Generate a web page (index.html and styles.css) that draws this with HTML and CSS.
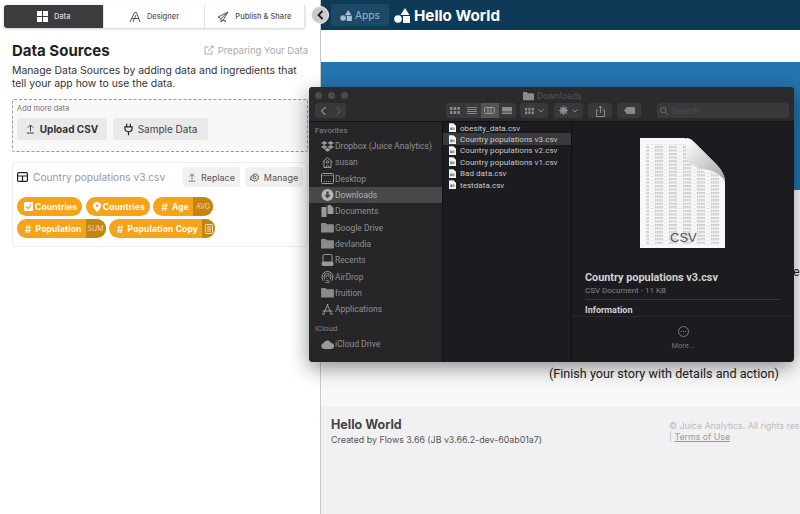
FILE: index.html
```html
<!DOCTYPE html>
<html lang="en">
<head>
    <meta charset="UTF-8">
    <title>Data Sources</title>
    <link rel="stylesheet" href="styles.css">
</head>
<body>
    <svg class="defs" width="0" height="0">
        <symbol id="folder" viewBox="0 0 14 12"><path d="M0 2q0-1 1-1h4l1 1.500h7q1 0 1 1v7q0 1-1 1H1q-1 0-1-1z" fill="#8b8b8d"/></symbol>
        <symbol id="csvfile" viewBox="0 0 8 10"><path d="M0 0h5l3 3v7H0z" fill="#f2f2f2"/><rect x="1.500" y="5" width="2.500" height="3" fill="#3f7fc0"/><rect x="4" y="5" width="2.500" height="3" fill="#c9a23a"/></symbol>
    </svg>

    <aside class="sidebar">
        <nav class="tabs">
            <a class="tab tab-active">
                <svg width="11" height="11" viewBox="0 0 11 11" fill="#fff"><rect width="5" height="5"/><rect x="6" width="5" height="5"/><rect y="6" width="5" height="5"/><rect x="6" y="6" width="5" height="5"/></svg>
                Data
            </a>
            <a class="tab">
                <svg width="12" height="12" viewBox="0 0 12 12" fill="none" stroke="#555"><path d="M1 11 5.500 1.500 7.500 1.500 11 11M3 7.500h7M4 11l3-7"/></svg>
                Designer
            </a>
            <a class="tab">
                <svg width="12" height="12" viewBox="0 0 12 12" fill="none" stroke="#555"><path d="M11 1 1 6l3 1.500L11 1 6 9l-2 2V7.500M6 9l3 1.500z"/></svg>
                Publish &amp; Share
            </a>
        </nav>

        <div class="title-row">
            <h1>Data Sources</h1>
            <a class="help-link">
                <svg width="10" height="10" viewBox="0 0 10 10" fill="none" stroke="#aaa"><path d="M8 5.500V9H1V2h3.500M4 6l5-5M6.500 1H9v2.500"/></svg>
                Preparing Your Data
            </a>
        </div>
        <p class="intro">Manage Data Sources by adding data and ingredients that tell your app how to use the data.</p>

        <section class="add-data">
            <div class="add-label">Add more data</div>
            <div class="add-buttons">
                <button class="btn btn-big btn-strong">
                    <svg width="9" height="10" viewBox="0 0 10 11" fill="none" stroke="#333"><path d="M5 8V1.500M2 4l3-3 3 3M1 10h8"/></svg>
                    Upload CSV
                </button>
                <button class="btn btn-big">
                    <svg width="9" height="13" viewBox="0 0 10 13" fill="none" stroke="#222" stroke-width="1.300"><path d="M3 0v3.500M7 0v3.500M1 3.500h8v2a4 3.500 0 0 1-8 0zM5 9v4"/></svg>
                    Sample Data
                </button>
            </div>
        </section>

        <section class="source-card">
            <div class="source-head">
                <svg width="11" height="10" viewBox="0 0 11 10" fill="none" stroke="#222" stroke-width="1.200"><rect x=".6" y=".6" width="9.800" height="8.800" rx="1"/><path d="M.6 4h9.800M5.500 4v5.400"/></svg>
                <span class="source-name">Country populations v3.csv</span>
                <button class="btn btn-small btn-replace">
                    <svg width="8" height="9" viewBox="0 0 10 11" fill="none" stroke="#555"><path d="M5 8V1.500M2 4l3-3 3 3M1 10h8"/></svg>
                    Replace
                </button>
                <button class="btn btn-small btn-manage">
                    <svg width="9" height="9" viewBox="0 0 10 10" fill="none" stroke="#444"><circle cx="5" cy="5" r="1.500"/><path d="m5 .6 1 1.100 1.500-.2.500 1.400 1.400.6-.4 1.500.4 1.500-1.400.6-.5 1.400-1.500-.2-1 1.100-1-1.100-1.500.2-.5-1.400L.6 7.500 1 6 .6 4.500 2 3.900l.5-1.400 1.500.2z"/></svg>
                    Manage
                </button>
            </div>
            <div class="pills">
                <span class="pill"><svg width="9" height="9" viewBox="0 0 9 9"><rect width="9" height="9" rx="1" fill="#fff"/><path d="m2 4.500 2 2 3-4" fill="none" stroke="#f4a31a" stroke-width="1.200"/></svg>Countries</span>
                <span class="pill"><svg width="8" height="10" viewBox="0 0 8 10"><path d="M4 0a4 4 0 0 1 4 4c0 2.500-4 6-4 6S0 6.500 0 4a4 4 0 0 1 4-4z" fill="#fff"/><circle cx="4" cy="3.800" r="1.300" fill="#f4a31a"/></svg>Countries</span>
                <span class="pill"><span class="hash">#</span>Age<span class="pill-tag">AVG</span></span>
                <span class="pill"><span class="hash">#</span>Population<span class="pill-tag">SUM</span></span>
                <span class="pill"><span class="hash">#</span>Population Copy<span class="pill-tag pill-tag-icon"><svg width="8" height="10" viewBox="0 0 8 10"><rect x=".5" y=".5" width="7" height="9" rx="1" fill="none" stroke="#fff" opacity=".8"/><path d="M2 3h4M2 5h4M2 7h4" stroke="#fff" opacity=".8"/></svg></span></span>
            </div>
        </section>
    </aside>

    <button class="collapse">
        <svg width="7" height="10" viewBox="0 0 7 10" fill="none" stroke="#222" stroke-width="1.800"><path d="M5.500 1 1.500 5l4 4"/></svg>
    </button>

    <main class="app">
        <header class="app-header">
            <a class="apps-btn">
                <svg width="12" height="11" viewBox="0 0 16 15" fill="#a9bdcb"><path d="M11 0l4.500 7h-9z"/><circle cx="4" cy="11" r="3.800"/><rect x="9" y="8" width="7" height="7"/></svg>
                Apps
            </a>
            <svg class="logo" width="16" height="15" viewBox="0 0 16 15" fill="#fff"><path d="M11 0l4.500 7h-9z"/><circle cx="4" cy="11" r="3.800"/><rect x="9" y="8" width="7" height="7"/></svg>
            <span class="app-name">Hello World</span>
        </header>
        <div class="app-gap"></div>
        <div class="hero"></div>
        <section class="story">
            <div class="story-line story-cut">e</div>
            <div class="story-line story-finish">(Finish your story with details and action)</div>
        </section>
        <footer class="app-footer">
            <div>
                <div class="foot-name">Hello World</div>
                <div class="foot-created">Created by Flows 3.66 (JB v3.66.2-dev-60ab01a7)</div>
            </div>
            <div class="foot-legal">
                <div>© Juice Analytics. All rights reserved.</div>
                <div>| <u>Terms of Use</u></div>
            </div>
        </footer>
    </main>

    <div class="finder">
        <div class="finder-bar">
            <div class="finder-title-row">
                <span class="light"></span><span class="light"></span><span class="light"></span>
                <span class="finder-title"><svg width="11" height="10"><use href="#folder"/></svg>Downloads</span>
            </div>
            <div class="finder-tools">
                <span class="tool tool-nav">
                    <svg width="7" height="10" viewBox="0 0 7 10" fill="none" stroke="#8a8a8c" stroke-width="1.200"><path d="M5.500 1 1.500 5l4 4"/></svg>
                    <svg width="7" height="10" viewBox="0 0 7 10" fill="none" stroke="#555" stroke-width="1.200"><path d="m1.500 1 4 4-4 4"/></svg>
                </span>
                <span class="tool tool-views">
                    <span class="view"><svg width="10" height="7" viewBox="0 0 10 7" fill="#8a8a8c"><rect width="2.500" height="3"/><rect x="3.700" width="2.500" height="3"/><rect x="7.400" width="2.500" height="3"/><rect y="4" width="2.500" height="3"/><rect x="3.700" y="4" width="2.500" height="3"/><rect x="7.400" y="4" width="2.500" height="3"/></svg></span>
                    <span class="view"><svg width="10" height="7" viewBox="0 0 10 7" stroke="#8a8a8c"><path d="M0 .5h10M0 2.500h10M0 4.500h10M0 6.500h10"/></svg></span>
                    <span class="view view-on"><svg width="11" height="7" viewBox="0 0 11 7" fill="none" stroke="#999"><rect x=".5" y=".5" width="10" height="6" rx="1"/><path d="M4 .5v6M7 .5v6"/></svg></span>
                    <span class="view"><svg width="10" height="7" viewBox="0 0 10 7" fill="#8a8a8c"><rect width="10" height="4.500"/><rect y="5.500" width="10" height="1.500"/></svg></span>
                </span>
                <span class="tool tool-group">
                    <svg width="9" height="8" viewBox="0 0 10 7" fill="#8a8a8c"><rect width="2.500" height="3"/><rect x="3.700" width="2.500" height="3"/><rect x="7.400" width="2.500" height="3"/><rect y="4" width="2.500" height="3"/><rect x="3.700" y="4" width="2.500" height="3"/><rect x="7.400" y="4" width="2.500" height="3"/></svg>
                    <svg width="6" height="4" viewBox="0 0 6 4" fill="none" stroke="#8a8a8c"><path d="m.5.500 2.500 2.500L5.500.5"/></svg>
                </span>
                <span class="tool tool-gear">
                    <svg width="9" height="9" viewBox="0 0 10 10"><circle cx="5" cy="5" r="2.700" fill="none" stroke="#8a8a8c" stroke-width="2"/><path d="M5 0v10M0 5h10M1.500 1.500l7 7M8.500 1.500l-7 7" stroke="#8a8a8c" stroke-width="1.300"/></svg>
                    <svg width="6" height="4" viewBox="0 0 6 4" fill="none" stroke="#8a8a8c"><path d="m.5.500 2.500 2.500L5.500.5"/></svg>
                </span>
                <span class="tool tool-share">
                    <svg width="9" height="12" viewBox="0 0 9 12" fill="none" stroke="#8a8a8c"><path d="M4.500 8V1M2.500 3l2-2 2 2M2.500 5H.5v6.500h8V5h-2"/></svg>
                </span>
                <span class="tool tool-tag">
                    <svg width="11" height="7" viewBox="0 0 11 7" fill="#8a8a8c"><path d="M3 0h7q1 0 1 1v5q0 1-1 1H3L0 3.500z"/></svg>
                </span>
                <span class="tool tool-search">
                    <svg width="8" height="8" viewBox="0 0 8 8" fill="none" stroke="#6f6f71"><circle cx="3.200" cy="3.200" r="2.700"/><path d="m5.200 5.200 2.500 2.500"/></svg>
                    Search
                </span>
            </div>
        </div>
        <div class="finder-body">
            <div class="finder-side">
                <div class="side-head">Favorites</div>
                <div class="side-row"><svg class="side-icon" width="13" height="11" viewBox="0 0 13 11" fill="#9a9a9c"><path d="m3.300 0 3.200 2L3.300 4 0 2zM9.700 0 13 2 9.700 4 6.500 2zM3.300 4l3.200 2-3.200 2L0 6zM9.700 4 13 6 9.700 8 6.500 6zM3.300 8.800l3.200-2 3.200 2-3.200 2z"/></svg>Dropbox (Juice Analytics)</div>
                <div class="side-row"><svg class="side-icon" width="11" height="11" viewBox="0 0 11 11" fill="none" stroke="#9a9a9c"><path d="M.5 5 5.500.7l5 4.300M2 4v6.500h7V4"/><circle cx="5.500" cy="5" r="1.200"/><path d="M4 10c0-2 3-2 3 0"/></svg>susan</div>
                <div class="side-row"><svg class="side-icon" width="13" height="11" viewBox="0 0 13 11" fill="none" stroke="#9a9a9c"><rect x=".5" y=".5" width="12" height="10" rx="1"/><path d="M.5 2.500h12M3 8.500h7" stroke-dasharray="1 1"/></svg>Desktop</div>
                <div class="side-row side-row-on"><svg class="side-icon" width="12" height="12" viewBox="0 0 12 12"><circle cx="6" cy="6" r="6" fill="#b5b5b7"/><path d="M4.800 2.500h2.400v3.500h2L6 9.500 2.800 6h2z" fill="#48484a"/></svg>Downloads</div>
                <div class="side-row"><svg class="side-icon" width="12" height="12" viewBox="0 0 12 12" fill="#9a9a9c"><path d="M0 2h5v10H0z"/><path d="M6 0h3l3 3v6H6z"/></svg>Documents</div>
                <div class="side-row"><svg class="side-icon" width="13" height="11"><use href="#folder"/></svg>Google Drive</div>
                <div class="side-row"><svg class="side-icon" width="13" height="11"><use href="#folder"/></svg>devlandia</div>
                <div class="side-row"><svg class="side-icon" width="12" height="12" viewBox="0 0 12 12" fill="none" stroke="#9a9a9c"><rect x="1.500" y=".5" width="9" height="8.500" rx="1.500"/><rect x=".5" y="8" width="11" height="3.500" rx="1" fill="#9a9a9c"/></svg>Recents</div>
                <div class="side-row"><svg class="side-icon" width="12" height="12" viewBox="0 0 12 12" fill="none" stroke="#9a9a9c"><circle cx="6" cy="6" r="5.500"/><circle cx="6" cy="6" r="3.500"/><circle cx="6" cy="6" r="1.500"/><path d="M2 11 6 6l4 5" stroke="#262628" stroke-width="1.500"/></svg>AirDrop</div>
                <div class="side-row"><svg class="side-icon" width="13" height="11"><use href="#folder"/></svg>fruition</div>
                <div class="side-row"><svg class="side-icon" width="12" height="12" viewBox="0 0 12 12" fill="none" stroke="#9a9a9c"><path d="M6.500 1 2.500 10M5.500 1 9.500 10M1 8h10M.5 11h3M8.500 11h3"/></svg>Applications</div>
                <div class="side-head side-head-gap">iCloud</div>
                <div class="side-row"><svg class="side-icon" width="13" height="9" viewBox="0 0 13 9" fill="#9a9a9c"><path d="M3 9a3 3 0 0 1-.4-5.900A4 4 0 0 1 10 3a3 3 0 0 1 0 6z"/></svg>iCloud Drive</div>
            </div>
            <ul class="finder-files">
                <li class="file"><svg width="7" height="9"><use href="#csvfile"/></svg>obesity_data.csv</li>
                <li class="file file-on"><svg width="7" height="9"><use href="#csvfile"/></svg>Country populations v3.csv</li>
                <li class="file"><svg width="7" height="9"><use href="#csvfile"/></svg>Country populations v2.csv</li>
                <li class="file"><svg width="7" height="9"><use href="#csvfile"/></svg>Country populations v1.csv</li>
                <li class="file"><svg width="7" height="9"><use href="#csvfile"/></svg>Bad data.csv</li>
                <li class="file"><svg width="7" height="9"><use href="#csvfile"/></svg>testdata.csv</li>
            </ul>
            <div class="finder-preview">
                <div class="doc">
                    <svg width="85" height="110" viewBox="0 0 85 110">
                        <defs>
                            <linearGradient id="fold" x1="0" y1="0" x2="1" y2="1"><stop offset="0" stop-color="#fff"/><stop offset="1" stop-color="#a4a4a4"/></linearGradient>
                            <pattern id="rows" width="14" height="3.550" patternUnits="userSpaceOnUse">
                                <path d="M0 3.300h14" stroke="#d6d6d6" stroke-width=".5"/>
                                <path d="M1 1.700h8" stroke="#808080" stroke-width=".8" stroke-dasharray="1.500 .6"/>
                            </pattern>
                        </defs>
                        <path d="M0 0h44q6 0 12 6l20 20q9 9 9 18v66H0z" fill="#f8f8f8"/>
                        <rect x="6" y="6" width="42" height="101" fill="url(#rows)"/>
                        <rect x="48" y="24" width="16" height="83" fill="url(#rows)"/>
                        <rect x="64" y="34" width="15" height="73" fill="url(#rows)"/>
                        <path d="M47 0q-3 14 1 24 6 5 20 8 12 2 17 12 0-9-9-18L56 6q-5-6-9-6z" fill="url(#fold)"/>
                    </svg>
                    <span class="doc-ext">CSV</span>
                </div>
                <div class="preview-name">Country populations v3.csv</div>
                <div class="preview-kind">CSV Document - 11 KB</div>
                <div class="preview-info">Information</div>
                <div class="preview-more">
                    <svg width="11" height="11" viewBox="0 0 11 11" fill="none" stroke="#8f8f91" stroke-width=".8"><circle cx="5.500" cy="5.500" r="5"/><path d="M3 5.500h.8M5.100 5.500h.8M7.200 5.500h.8" stroke-width="1"/></svg>
                    <span>More...</span>
                </div>
            </div>
        </div>
    </div>
</body>
</html>
```

FILE: styles.css
```css
* {
    box-sizing: border-box;
}

body {
    font-family: 'Inter', 'Liberation Sans', sans-serif;
    margin: 0;
    width: 800px;
    height: 514px;
    overflow: hidden;
    display: flex;
    background-color: #fff;
    color: #333;
}

.defs {
    position: absolute;
}

/* left panel */
.sidebar {
    width: 321px;
    flex-shrink: 0;
    height: 514px;
    padding: 5px 12px 0;
    border-right: 1px solid #c9c9c9;
    background-color: #fff;
}

.tabs {
    display: flex;
    height: 23px;
    margin: 0 3px 0 -8px;
    border-radius: 3px;
    box-shadow: 0 1px 3px rgba(0, 0, 0, 0.2);
}

.tab {
    flex: 1;
    display: flex;
    align-items: center;
    justify-content: center;
    gap: 6px;
    font-size: 7.5px;
    font-weight: 500;
    color: #555;
    border-right: 1px solid #e4e4e4;
}

.tab-active {
    background-color: #3c3c3e;
    color: #ddd;
    border-radius: 3px 0 0 3px;
}

.title-row {
    display: flex;
    align-items: center;
    justify-content: space-between;
    margin-top: 13px;
    height: 18px;
}

h1 {
    margin: 0;
    font-size: 15px;
    font-weight: 700;
    color: #222;
}

.help-link {
    display: flex;
    align-items: center;
    gap: 4px;
    font-size: 9.5px;
    color: #aaa;
}

.intro {
    margin: 5px 0 0;
    font-size: 10.4px;
    line-height: 13px;
    color: #333;
}

.add-data {
    margin-top: 9px;
    height: 53px;
    padding: 4px;
    border: 1px dashed #999;
    border-radius: 2px;
    background-color: #f8f8f8;
}

.add-label {
    font-size: 7.5px;
    color: #777;
    height: 10px;
}

.add-buttons {
    display: flex;
    gap: 6px;
    margin-top: 4px;
}

.btn {
    display: flex;
    align-items: center;
    justify-content: center;
    border: none;
    border-radius: 3px;
    font-family: inherit;
    padding: 0;
}

.btn-big {
    height: 22px;
    width: 95px;
    gap: 5px;
    background-color: #e9e9e9;
    font-size: 10px;
    color: #444;
}

.btn-strong {
    width: 90px;
    font-weight: 700;
    color: #333;
}

.source-card {
    margin-top: 10px;
    height: 85px;
    padding: 4px;
    border: 1px solid #eee;
    border-radius: 3px;
}

.source-head {
    display: flex;
    align-items: center;
    height: 20px;
    gap: 5px;
}

.source-name {
    flex: 1;
    font-size: 10.2px;
    color: #999;
}

.btn-small {
    height: 20px;
    gap: 5px;
    background-color: #f0f0f1;
    font-size: 9px;
    color: #555;
}

.btn-replace {
    width: 57px;
}

.btn-manage {
    width: 58px;
}

.pills {
    display: flex;
    flex-wrap: wrap;
    gap: 3px 3.5px;
    margin-top: 10px;
    width: 210px;
}

.pill {
    display: flex;
    align-items: center;
    height: 19px;
    padding: 0 5px 0 8px;
    gap: 4px;
    border-radius: 10px;
    background-color: #f4a31a;
    color: #fff;
    font-size: 8.5px;
    font-weight: 700;
    letter-spacing: 0.15px;
    overflow: hidden;
}

.pill > svg {
    margin: 0 -2px 0 -1px;
}

.hash {
    font-size: 10px;
    font-weight: 500;
}

.pill-tag {
    display: flex;
    align-items: center;
    justify-content: center;
    align-self: stretch;
    width: 20px;
    margin-right: -5px;
    background-color: #c5830f;
    color: #f2d9a8;
    font-size: 7px;
    font-weight: 400;
    letter-spacing: 0;
}

.pill-tag-icon {
    width: 13px;
}

.collapse {
    position: absolute;
    left: 311px;
    top: 6px;
    width: 18px;
    height: 18px;
    padding: 0;
    display: flex;
    align-items: center;
    justify-content: center;
    border: 1px solid #f2f2f2;
    border-radius: 50%;
    background-color: #c9c9c9;
    z-index: 5;
}

/* app preview */
.app {
    flex: 1;
    min-width: 0;
    height: 514px;
    display: flex;
    flex-direction: column;
    background-color: #f8f8fa;
    overflow: hidden;
}

.app-header {
    flex-shrink: 0;
    display: flex;
    align-items: center;
    height: 30px;
    padding-left: 10px;
    background-color: #0f3a57;
}

.apps-btn {
    display: flex;
    align-items: center;
    gap: 3px;
    width: 58px;
    height: 22px;
    padding-left: 9px;
    border-radius: 3px;
    background-color: #1b4966;
    color: #9fb6c6;
    font-size: 10.2px;
}

.logo {
    margin-left: 5px;
}

.app-name {
    margin-left: 4px;
    font-size: 15.2px;
    font-weight: 700;
    color: #fff;
}

.app-gap {
    flex-shrink: 0;
    height: 32px;
    background-color: #fff;
}

.hero {
    flex-shrink: 0;
    height: 128px;
    background-color: #2474ae;
}

.story {
    flex-shrink: 0;
    height: 217px;
    background: linear-gradient(#fff 170px, #f8f8fa 200px);
    font-family: 'Roboto', sans-serif;
    font-size: 12.6px;
    color: #222;
}

.story-line {
    white-space: nowrap;
}

.story-cut {
    margin: 74px 0 0 472px;
    height: 16px;
}

.story-finish {
    margin: 86px 0 0 228px;
}

.app-footer {
    flex: 1;
    display: flex;
    justify-content: space-between;
    padding: 10px 0 0 10px;
    background-color: #f1f1f3;
}

.foot-name {
    font-size: 12.5px;
    font-weight: 700;
    color: #444;
}

.foot-created {
    margin-top: 2px;
    font-size: 8.85px;
    color: #555;
}

.foot-legal {
    width: 131px;
    flex-shrink: 0;
    margin-top: 3px;
    font-size: 8.8px;
    line-height: 11px;
    color: #bbb;
    white-space: nowrap;
    overflow: hidden;
}

.foot-legal u {
    color: #999;
}

/* finder window */
.finder {
    position: absolute;
    left: 309px;
    top: 87px;
    width: 485px;
    height: 275px;
    display: flex;
    flex-direction: column;
    border-radius: 4px;
    background-color: #1c1b1f;
    box-shadow: 0 6px 20px rgba(0, 0, 0, 0.45);
    overflow: hidden;
    z-index: 3;
    color: #aaa;
    font-family: 'Roboto', 'Liberation Sans', sans-serif;
}

.finder-bar {
    flex-shrink: 0;
    height: 35px;
    background-color: #2b2b2d;
    border-bottom: 1px solid #111;
}

.finder-title-row {
    display: flex;
    align-items: center;
    gap: 6px;
    height: 15px;
    padding: 2px 0 0 6px;
}

.light {
    width: 7px;
    height: 7px;
    border-radius: 50%;
    background-color: #4c4c4e;
}

.finder-title {
    display: flex;
    align-items: center;
    gap: 3px;
    margin-left: 169px;
    font-size: 9px;
    color: #555;
}

.finder-tools {
    display: flex;
    gap: 4px;
    margin-top: 1px;
    padding-left: 6px;
}

.tool {
    display: flex;
    align-items: center;
    justify-content: center;
    height: 15px;
    border-radius: 3px;
    background-color: #39393b;
}

.tool-nav {
    width: 31px;
    gap: 8px;
    margin-right: 96px;
}

.tool-views {
    width: 70px;
    overflow: hidden;
}

.view {
    flex: 1;
    display: flex;
    align-items: center;
    justify-content: center;
    height: 100%;
}

.view-on {
    background-color: #555557;
}

.tool-group {
    width: 28px;
    gap: 4px;
}

.tool-gear {
    width: 29px;
    gap: 4px;
    margin-left: 2px;
}

.tool-share {
    width: 24px;
    margin-left: 1px;
}

.tool-tag {
    width: 24px;
    margin-left: 1px;
}

.tool-search {
    width: 132px;
    margin-left: 12px;
    justify-content: flex-start;
    gap: 3px;
    padding-left: 3px;
    font-size: 9px;
    color: #4b4b4d;
}

.finder-body {
    flex: 1;
    display: flex;
    min-height: 0;
}

.finder-side {
    width: 134px;
    flex-shrink: 0;
    padding-top: 2px;
    background-color: #262628;
    border-right: 1px solid #111;
    font-size: 8.5px;
}

.side-head {
    height: 14px;
    line-height: 14px;
    padding-left: 6px;
    font-size: 8px;
    color: #858587;
}

.side-head-gap {
    margin-top: 5px;
}

.side-row {
    display: flex;
    align-items: center;
    height: 16.3px;
    padding-left: 11px;
    color: #8f8f91;
    white-space: nowrap;
}

.side-icon {
    width: 15px;
    flex-shrink: 0;
}

.side-row-on {
    background-color: #48484a;
    color: #b0b0b2;
}

.finder-files {
    width: 129px;
    flex-shrink: 0;
    margin: 0;
    padding: 0;
    list-style: none;
    border-right: 1px solid #111;
}

.file {
    display: flex;
    align-items: center;
    gap: 4px;
    height: 11.4px;
    padding-left: 6px;
    font-size: 8.1px;
    color: #c9c9c9;
    white-space: nowrap;
}

.file-on {
    background-color: #3a3a3c;
}

.finder-preview {
    flex: 1;
    display: flex;
    flex-direction: column;
    min-width: 0;
    padding-top: 16px;
    color: #d2d2d2;
}

.doc {
    position: relative;
    align-self: center;
    width: 85px;
    height: 110px;
    margin-left: -1px;
}

.doc svg {
    display: block;
}

.doc-ext {
    position: absolute;
    left: 30px;
    bottom: 3px;
    font-family: 'Liberation Sans', sans-serif;
    font-size: 13px;
    color: #555;
}

.preview-name {
    margin: 23px 0 0 13px;
    font-size: 10.85px;
    font-weight: 700;
}

.preview-kind {
    margin: 2px 0 0 13px;
    padding-bottom: 4px;
    font-size: 8px;
    color: #858587;
    border-bottom: 1px solid #38383a;
    width: 195px;
}

.preview-info {
    margin: 5px 0 0 13px;
    font-size: 9px;
    font-weight: 700;
}

.preview-more {
    display: flex;
    flex-direction: column;
    align-items: center;
    gap: 4px;
    margin-top: 1px;
    padding-top: 9px;
    border-top: 1px solid #2a2a2c;
    font-size: 7.5px;
    color: #777;
}

.preview-more svg {
    display: block;
}
```
